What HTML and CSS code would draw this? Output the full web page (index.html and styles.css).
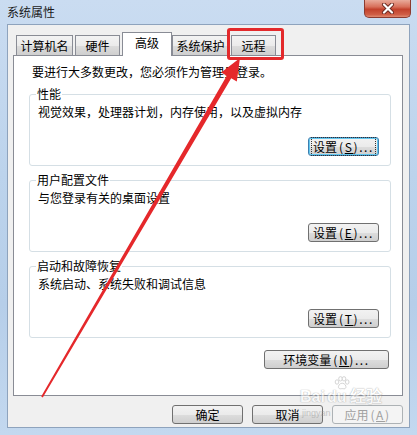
FILE: index.html
```html
<!DOCTYPE html>
<html lang="zh-CN">
<head>
  <meta charset="UTF-8">
  <title>系统属性</title>
  <link rel="stylesheet" href="styles.css">
</head>
<body>
  <div class="window">
    <div class="titlebar">
      <span class="title">系统属性</span>
      <div class="close">
        <svg width="14" height="11" viewBox="0 0 14 11">
          <path d="M3 1.5 L11 9.5 M11 1.5 L3 9.5" stroke="#6b2a22" stroke-width="4" stroke-linecap="round"/>
          <path d="M3 1.5 L11 9.5 M11 1.5 L3 9.5" stroke="#fff" stroke-width="2.2" stroke-linecap="round"/>
        </svg>
      </div>
    </div>

    <div class="client">
      <div class="tabs">
        <div class="tab t-name">计算机名</div>
        <div class="tab t-hw">硬件</div>
        <div class="tab t-adv active">高级</div>
        <div class="tab t-prot">系统保护</div>
        <div class="tab t-remote">远程</div>
      </div>

      <div class="panel">
        <p class="intro">要进行大多数更改，您必须作为管理员登录。</p>

        <fieldset class="group">
          <legend>性能</legend>
          <p class="desc">视觉效果，处理器计划，内存使用，以及虚拟内存</p>
          <div class="row">
            <button class="btn focused"><span class="focus-rect">设置<span class="mn">(<u>S</u>)...</span></span></button>
          </div>
        </fieldset>

        <fieldset class="group">
          <legend>用户配置文件</legend>
          <p class="desc">与您登录有关的桌面设置</p>
          <div class="row">
            <button class="btn">设置<span class="mn">(<u>E</u>)...</span></button>
          </div>
        </fieldset>

        <fieldset class="group">
          <legend>启动和故障恢复</legend>
          <p class="desc">系统启动、系统失败和调试信息</p>
          <div class="row">
            <button class="btn">设置<span class="mn">(<u>T</u>)...</span></button>
          </div>
        </fieldset>

        <div class="row env-row">
          <button class="btn env">环境变量<span class="mn">(<u>N</u>)...</span></button>
        </div>
      </div>

      <div class="footer">
        <button class="btn">确定</button>
        <button class="btn">取消</button>
        <button class="btn disabled">应用<span class="mn">(<u>A</u>)</span></button>
      </div>
    </div>

    <!-- annotation overlays -->
    <div class="red-box"></div>
    <svg class="arrow" width="417" height="435" viewBox="0 0 417 435">
      <polygon fill="#e5282b" points="41.2,396.5 226.8,75.7 221.2,72.5 240,58 236.8,81.5 231.2,78.3 42.8,397.5"/>
    </svg>
    <div class="watermark">
      <svg class="paw" width="16" height="14" viewBox="0 0 16 14" fill="#fff" stroke="#999" stroke-width="0.8">
        <ellipse cx="3" cy="6" rx="1.8" ry="2.2"/>
        <ellipse cx="6.5" cy="2.8" rx="1.8" ry="2.2"/>
        <ellipse cx="10" cy="2.8" rx="1.8" ry="2.2"/>
        <ellipse cx="13.2" cy="6" rx="1.8" ry="2.2"/>
        <path d="M8.2 7.2 C5.5 7.2 4 10 4.6 11.8 C5.3 13.4 7 12.6 8.2 12.6 C9.4 12.6 11.1 13.4 11.8 11.8 C12.4 10 10.9 7.2 8.2 7.2 Z"/>
      </svg>
      <span class="wm-big">Bai<span class="wm-du">du</span>经验</span>
      <span class="wm-small">jingyan</span>
    </div>
  </div>
</body>
</html>
```

FILE: styles.css
```css
body {
  margin: 0;
  font-family: "Noto Sans CJK SC", "Noto Sans", sans-serif;
  font-size: 12px;
  color: #000;
  overflow: hidden;
}
.window {
  position: relative;
  width: 417px;
  height: 435px;
  display: flex;
  flex-direction: column;
  background: linear-gradient(180deg, #cadcf1 0%, #bcd3ec 40%, #b6cee9 70%, #c3d8ef 100%);
}
.titlebar {
  height: 24px;
  display: flex;
  justify-content: space-between;
  align-items: flex-start;
}
.title {
  padding-left: 7px;
  line-height: 24px;
  color: #1a1a1a;
}
.close {
  width: 45px;
  height: 17px;
  margin-right: 6px;
  border: 1px solid #8b3b30;
  border-top: none;
  border-radius: 0 0 5px 5px;
  background: linear-gradient(180deg, #e9ab9b 0%, #d8705b 40%, #c2412c 55%, #cf5d45 85%, #e08a70 100%);
  display: flex;
  justify-content: center;
  align-items: center;
}
.client {
  flex: 1;
  margin: 0 7px 7px 7px;
  background: #f0f0f0;
  border: 1px solid #8ea3bd;
  display: flex;
  flex-direction: column;
}
.tabs {
  display: flex;
  align-items: flex-end;
  height: 23px;
  margin-top: 7px;
  padding-left: 8px;
}
.tab {
  height: 19px;
  line-height: 19px;
  text-align: center;
  border: 1px solid #898c95;
  border-bottom: none;
  background: linear-gradient(180deg, #f3f3f3 0%, #ebebeb 50%, #dddddd 51%, #cfcfcf 100%);
  box-sizing: content-box;
}
.t-name { width: 55px; }
.t-hw { width: 43px; margin-left: 2px; }
.t-adv { width: 48px; margin-left: 2px; }
.t-prot { width: 55px; }
.t-remote { width: 43px; margin-left: 2px; }
.tab.active {
  height: 23px;
  line-height: 20px;
  background: #fff;
  margin-bottom: -1px;
  position: relative;
  z-index: 1;
}
.panel {
  box-sizing: border-box;
  height: 341px;
  margin: 0 6px 0 5px;
  background: #fff;
  border: 1px solid #898c95;
  padding: 8px 11px 0 15px;
}
.intro {
  margin: 0 0 0 3px;
  line-height: 16px;
}
.group {
  margin: 6px 0 0 0;
  padding: 2px 11px 9px 8px;
  border: 1px solid #d5dfe5;
  border-radius: 3px;
  min-width: 0;
}
.group legend {
  padding: 0 1px;
  margin-left: -2px;
  line-height: 16px;
}
.desc {
  margin: 0;
  line-height: 16px;
}
.row {
  display: flex;
  justify-content: flex-end;
  margin-top: 17px;
}
.env-row {
  margin-top: 12px;
  padding-right: 2px;
}
.btn {
  width: 71px;
  height: 19px;
  padding: 0;
  border: 1px solid #707070;
  border-radius: 3px;
  background: linear-gradient(180deg, #f2f2f2 0%, #ebebeb 50%, #dddddd 51%, #cfcfcf 100%);
  font-family: inherit;
  font-size: 12px;
  line-height: 16px;
  color: #000;
  text-align: center;
}
.btn.env {
  width: 125px;
}
.btn.focused {
  border-color: #3c7fb1;
  box-shadow: inset 0 0 0 1px #63c7ee;
}
.focus-rect {
  outline: 1px dotted #333;
  outline-offset: 0;
  padding: 0 1px;
}
.mn {
  letter-spacing: 1.6px;
  margin-left: 2px;
}
.btn.disabled {
  color: #a0a0a0;
  border-color: #adb2b5;
  background: #f4f4f4;
}
.footer {
  display: flex;
  justify-content: flex-end;
  gap: 9px;
  margin: 9px 6px 0 0;
}
.red-box {
  position: absolute;
  left: 227px;
  top: 28px;
  width: 51px;
  height: 26px;
  border: 3px solid #e3292b;
  border-radius: 3px;
}
.arrow {
  position: absolute;
  left: 0;
  top: 0;
  pointer-events: none;
}
.watermark {
  position: absolute;
  left: 300px;
  top: 376px;
  display: flex;
  flex-direction: column;
  opacity: 0.5;
  pointer-events: none;
}
.paw {
  margin-left: 34px;
}
.wm-big {
  font-family: "Liberation Sans", sans-serif;
  font-size: 16px;
  font-weight: bold;
  line-height: 14px;
  color: #fff;
  text-shadow: 0 0 1px #777, 0 0 1px #777;
}
.wm-du {
  margin-left: 2px;
  margin-right: 4px;
}
.wm-small {
  font-family: "Liberation Sans", sans-serif;
  font-size: 9px;
  line-height: 10px;
  margin-top: 4px;
  margin-left: 2px;
  color: #999;
}
```
